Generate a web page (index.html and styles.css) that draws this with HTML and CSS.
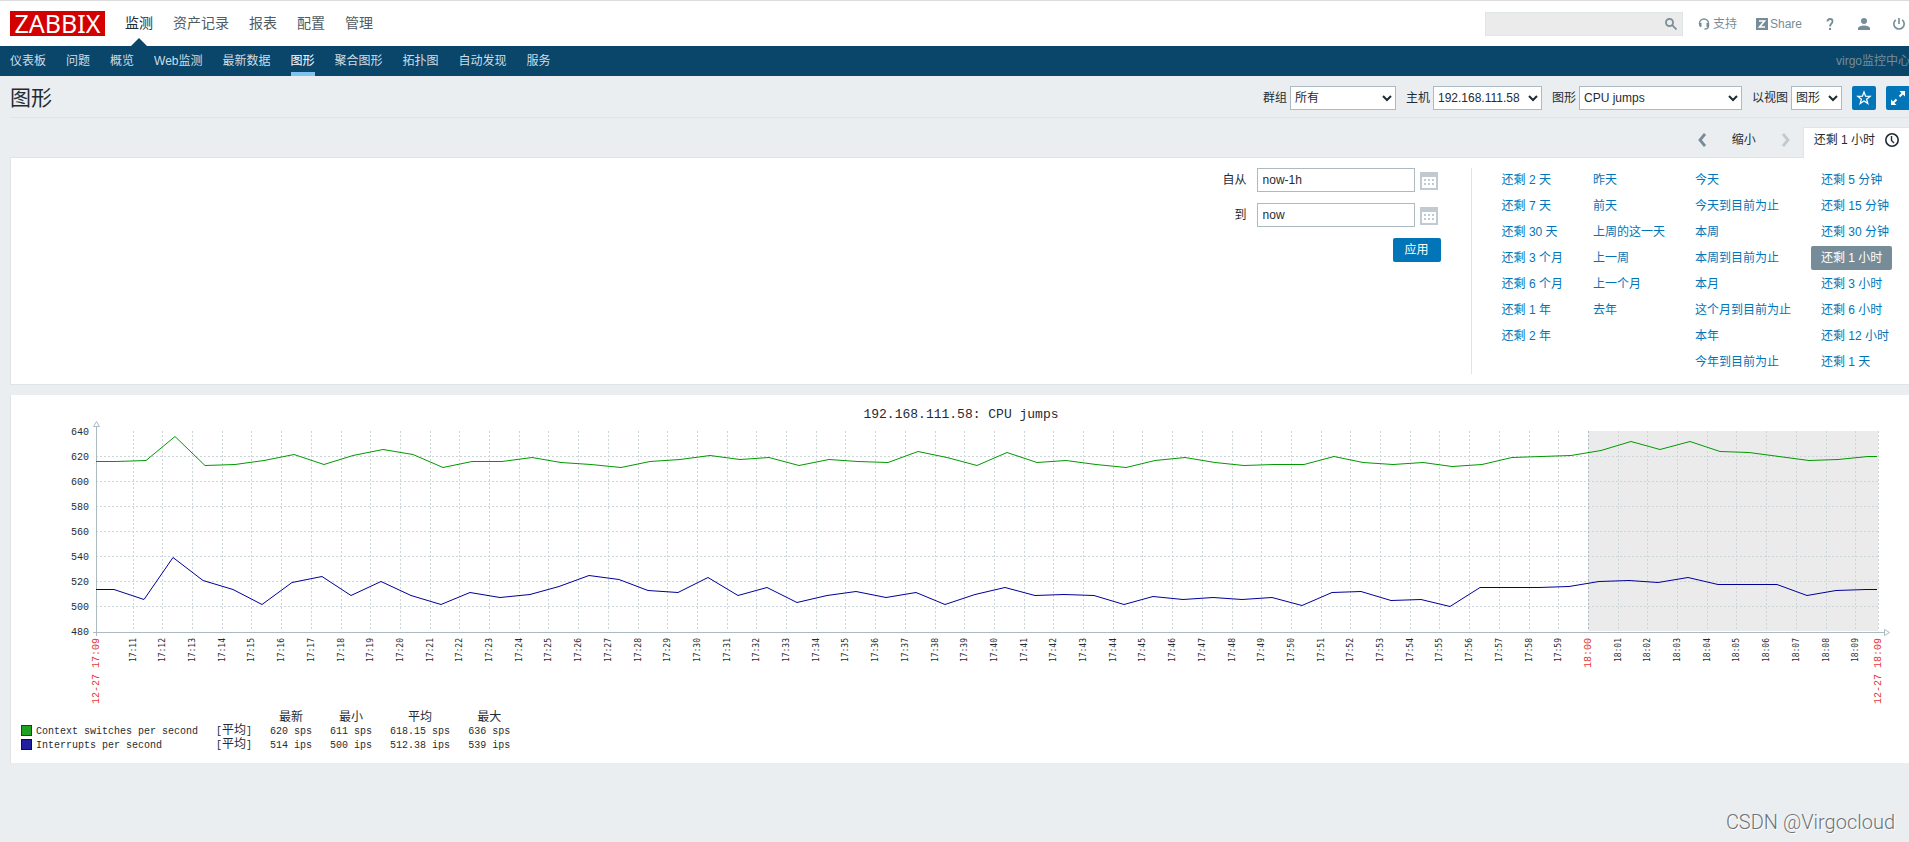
FILE: index.html
```html
<!DOCTYPE html>
<html lang="zh-CN">
<head>
<meta charset="utf-8">
<title>图形</title>
<link rel="stylesheet" href="styles.css">
</head>
<body>
<div class="page">
  <header class="top">
    <a class="logo" href="#" aria-label="ZABBIX">ZABBIX</a>
    <nav class="menu">
      <a class="current" href="#">监测</a>
      <a href="#">资产记录</a>
      <a href="#">报表</a>
      <a href="#">配置</a>
      <a href="#">管理</a>
    </nav>
    <div class="tools">
      <div class="search">
        <input type="text" aria-label="搜索">
        <button type="button" aria-label="搜索"><svg width="12" height="12" viewBox="0 0 12 12" fill="none" stroke="#768d99" stroke-width="1.700"><circle cx="4.500" cy="4.500" r="3.600"/><path d="M7.200 7.200l4.300 4.300"/></svg></button>
      </div>
      <a class="support" href="#"><svg width="12" height="12" viewBox="0 0 12 12"><path d="M1.500 6V5.500a4.500 4.500 0 0 1 9 0V8q0 3-4 3" fill="none" stroke="#768d99" stroke-width="1.400"/><path d="M1 5h2.500v4H2.500Q1 8.500 1 7zM8.500 5H11v2q0 1.500-1.500 2h-1z" fill="#768d99"/></svg>支持</a>
      <a class="share" href="#"><svg width="12" height="12" viewBox="0 0 12 12"><path d="M0 0h12v12H0z" fill="#768d99"/><path d="M3 3h5.500L3.500 9H9" fill="none" stroke="#fff" stroke-width="1.600"/></svg>Share</a>
      <a class="icon" href="#" aria-label="帮助"><svg width="12" height="14" viewBox="0 0 12 14"><path d="M3.500 4.500Q3.500 2 6 2t2.500 2.300Q8.500 5.800 7.300 6.800T6 9.500" fill="none" stroke="#768d99" stroke-width="1.800"/><path d="M5 11h2v2H5z" fill="#768d99"/></svg></a>
      <a class="icon" href="#" aria-label="用户"><svg width="12" height="14" viewBox="0 0 12 14" fill="#768d99"><circle cx="6" cy="4" r="3"/><path d="M0 13v-2q1-2.500 6-2.500t6 2.500v2z"/></svg></a>
      <a class="icon" href="#" aria-label="退出"><svg width="14" height="14" viewBox="0 0 14 14" fill="none" stroke="#768d99" stroke-width="1.600"><path d="M3.700 2.800a5.200 5.200 0 1 0 6.600 0M7 1v6"/></svg></a>
    </div>
  </header>
  <nav class="subnav">
    <a href="#">仪表板</a>
    <a href="#">问题</a>
    <a href="#">概览</a>
    <a href="#">Web监测</a>
    <a href="#">最新数据</a>
    <a class="current" href="#">图形</a>
    <a href="#">聚合图形</a>
    <a href="#">拓扑图</a>
    <a href="#">自动发现</a>
    <a href="#">服务</a>
    <span class="server">virgo监控中心</span>
  </nav>
  <main class="content">
    <div class="title-row">
      <h1>图形</h1>
      <form class="filters">
        <label>群组 <select class="group"><option>所有</option></select></label>
        <label>主机 <select class="host"><option>192.168.111.58</option></select></label>
        <label>图形 <select class="graph"><option>CPU jumps</option></select></label>
        <label>以视图 <select class="view"><option>图形</option></select></label>
        <button class="square" type="button" aria-label="收藏"><svg width="16" height="16" viewBox="0 0 16 16" fill="none" stroke="#fff" stroke-width="1.300"><path d="M8 2l1.600 4.200 4.500.2-3.500 2.800 1.200 4.300L8 11l-3.800 2.500 1.200-4.300L1.900 6.400l4.500-.2z"/></svg></button>
        <button class="square" type="button" aria-label="全屏"><svg width="14" height="14" viewBox="0 0 14 14" fill="#fff" stroke="#fff"><path d="M8.500 0h5.500v5.500zM0 8.500V14h5.500z" stroke="none"/><path d="M8.500 5.500l3-3M5.500 8.500l-3 3" stroke-width="2"/></svg></button>
      </form>
    </div>
    <div class="tabs">
      <button class="step" type="button" aria-label="上一页"><svg width="8" height="14" viewBox="0 0 8 14" fill="none" stroke="#768d99" stroke-width="2.800"><path d="M7 1L2 7l5 6"/></svg></button>
      <button class="zoom-out" type="button">缩小</button>
      <button class="step" type="button" aria-label="下一页" disabled><svg width="8" height="14" viewBox="0 0 8 14" fill="none" stroke="#c0cad0" stroke-width="2.800"><path d="M1 1l5 6-5 6"/></svg></button>
      <a class="tab" href="#">还剩 1 小时 <svg width="14" height="14" viewBox="0 0 14 14" fill="none" stroke="#1f2c33"><circle cx="7" cy="7" r="6.200" stroke-width="1.600"/><path d="M6.500 3v4.500L9 10" stroke-width="1.400"/></svg></a>
    </div>
    <section class="period">
      <form class="range">
        <label for="from">自从</label>
        <input id="from" type="text" value="now-1h">
        <button class="cal" type="button" aria-label="选择开始日期"><svg width="18" height="18" viewBox="0 0 18 18"><path d="M1 1h16v16H1z" fill="#fff" stroke="#c0cad0" stroke-width="2"/><path d="M1 1h16v4H1z" fill="#c0cad0"/><path d="M4 8h10M4 12h10" stroke="#c0cad0" stroke-width="2" stroke-dasharray="2"/></svg></button>
        <label for="to">到</label>
        <input id="to" type="text" value="now">
        <button class="cal" type="button" aria-label="选择结束日期"><svg width="18" height="18" viewBox="0 0 18 18"><path d="M1 1h16v16H1z" fill="#fff" stroke="#c0cad0" stroke-width="2"/><path d="M1 1h16v4H1z" fill="#c0cad0"/><path d="M4 8h10M4 12h10" stroke="#c0cad0" stroke-width="2" stroke-dasharray="2"/></svg></button>
        <button class="apply" type="button">应用</button>
      </form>
      <div class="presets">
        <div class="column">
          <a href="#">还剩 2 天</a><a href="#">还剩 7 天</a><a href="#">还剩 30 天</a><a href="#">还剩 3 个月</a><a href="#">还剩 6 个月</a><a href="#">还剩 1 年</a><a href="#">还剩 2 年</a>
        </div>
        <div class="column">
          <a href="#">昨天</a><a href="#">前天</a><a href="#">上周的这一天</a><a href="#">上一周</a><a href="#">上一个月</a><a href="#">去年</a>
        </div>
        <div class="column">
          <a href="#">今天</a><a href="#">今天到目前为止</a><a href="#">本周</a><a href="#">本周到目前为止</a><a href="#">本月</a><a href="#">这个月到目前为止</a><a href="#">本年</a><a href="#">今年到目前为止</a>
        </div>
        <div class="column">
          <a href="#">还剩 5 分钟</a><a href="#">还剩 15 分钟</a><a href="#">还剩 30 分钟</a><a class="selected" href="#">还剩 1 小时</a><a href="#">还剩 3 小时</a><a href="#">还剩 6 小时</a><a href="#">还剩 12 小时</a><a href="#">还剩 1 天</a>
        </div>
      </div>
    </section>
    <section class="chart">
      <svg id="plot" viewBox="0 0 1899 316" role="img" aria-label="192.168.111.58: CPU jumps"></svg>
      <table class="legend">
        <thead>
          <tr><th class="key"></th><th></th><th></th><th>最新</th><th>最小</th><th>平均</th><th>最大</th></tr>
        </thead>
        <tbody>
          <tr><td class="key"><i class="swatch green"></i></td><td>Context switches per second</td><td>[<b>平均</b>]</td><td>620 sps</td><td>611 sps</td><td>618.15 sps</td><td>636 sps</td></tr>
          <tr><td class="key"><i class="swatch blue"></i></td><td>Interrupts per second</td><td>[<b>平均</b>]</td><td>514 ips</td><td>500 ips</td><td>512.38 ips</td><td>539 ips</td></tr>
        </tbody>
      </table>
    </section>
  </main>
</div>
<div class="watermark">CSDN @Virgocloud</div>
<script src="chart.js"></script>
</body>
</html>
```

FILE: styles.css
```css
* { box-sizing: border-box; }

body {
  margin: 0;
  min-height: 100vh;
  position: relative;
  overflow: hidden;
  background: #ebeef0;
  color: #1f2c33;
  font: 12px/14px "Liberation Sans", "Noto Sans CJK SC", sans-serif;
}

a { color: #0275b8; text-decoration: none; }
svg { display: block; flex: none; }
button, input, select { font: inherit; color: inherit; margin: 0; }
button { border: 0; padding: 0; background: none; }

/* The page is slightly wider than the window, as its right margin runs off screen. */
.page { width: calc(100% + 11px); }

.top {
  display: flex;
  align-items: center;
  height: 46px;
  padding: 0 10px;
  border-top: 1px solid #dcdcdc;
  background: #fff;
}
.logo {
  width: 95px;
  height: 25px;
  background: #d40000;
  color: #fff;
  font: 25px/25px "Noto Sans", sans-serif;
  text-align: center;
}
.menu { display: flex; gap: 20px; margin-left: 20px; font-size: 14px; }
.menu a { position: relative; line-height: 45px; color: #4f5c63; }
.menu .current { color: #1f2c33; }
.menu .current::after {
  content: "";
  position: absolute;
  left: 50%;
  bottom: 0;
  margin-left: -8px;
  border: 8px solid transparent;
  border-top: 0;
  border-bottom-color: #0a466a;
}
.tools { display: flex; align-items: center; margin-left: auto; padding-right: 4px; }
.tools a { display: flex; align-items: center; color: #768d99; }
.search {
  display: flex;
  align-items: center;
  width: 198px;
  height: 24px;
  padding-right: 5px;
  border: 1px solid #dfe4e7;
  background: #ebebeb;
}
.search input { flex: 1; min-width: 0; border: 0; background: none; }
.support { gap: 3px; margin-left: 15px; }
.share { gap: 2px; margin-left: 19px; }
.icon { margin-left: 22px; }

.subnav {
  display: flex;
  gap: 20px;
  height: 30px;
  padding: 0 10px;
  background: #0a466a;
}
.subnav a { height: 30px; line-height: 30px; color: #cfdde5; white-space: nowrap; }
.subnav .current { color: #fff; border-bottom: 4px solid #7dc3f0; }
.server { margin-left: auto; line-height: 30px; color: #768d99; white-space: nowrap; }

.content { padding: 0 10px; }
.title-row {
  display: flex;
  align-items: center;
  justify-content: space-between;
  height: 42px;
  padding-top: 3px;
  border-bottom: 1px solid #dfe4e7;
}
h1 { margin: 0; font-size: 21px; line-height: 30px; font-weight: 400; }
.filters { display: flex; gap: 10px; }
.filters label { display: flex; align-items: center; gap: 3px; }
.filters select {
  height: 24px;
  border: 1px solid #acbbc2;
  border-radius: 0;
  background: #fff;
  padding: 0;
}
.filters .group { width: 106px; }
.filters .host { width: 109px; }
.filters .graph { width: 163px; }
.filters .view { width: 51px; }
.square {
  display: grid;
  place-items: center;
  width: 24px;
  height: 24px;
  border-radius: 2px;
  background: #0275b8;
}

.tabs {
  display: flex;
  justify-content: flex-end;
  height: 39px;
  padding-top: 9px;
}
.step, .zoom-out { height: 25px; }
.step { display: grid; place-items: center; width: 30px; }
.zoom-out { margin: 0 15px; }
.tab {
  display: flex;
  align-items: center;
  gap: 10px;
  height: 31px;
  margin-left: 2px;
  padding: 0 11px 6px 10px;
  border: 1px solid #dfe4e7;
  border-width: 1px 0 0 1px;
  background: #fff;
  color: #1f2c33;
  position: relative;
}
.period {
  display: flex;
  justify-content: flex-end;
  padding: 10px;
  border: 1px solid #dfe4e7;
  background: #fff;
}
.range {
  display: grid;
  grid-template-columns: auto 158px 21px;
  grid-auto-rows: 24px;
  gap: 11px 5px;
  align-items: center;
  padding-right: 30px;
}
.range label { text-align: right; margin-right: 5px; }
.range input { height: 24px; border: 1px solid #acbbc2; padding: 0 5px; }
.cal { display: flex; padding-top: 2px; }
.apply {
  grid-column: 1 / -1;
  justify-self: end;
  width: 48px;
  height: 24px;
  border-radius: 2px;
  background: #0275b8;
  color: #fff;
}
.presets {
  display: flex;
  gap: 10px;
  padding-left: 20px;
  border-left: 1px solid #dfe4e7;
}
.column { display: flex; flex-direction: column; align-items: flex-start; gap: 2px; }
.column a { padding: 0 10px; line-height: 24px; border-radius: 2px; white-space: nowrap; }
.column .selected { background: #768d99; color: #fff; }

.chart {
  margin-top: 10px;
  padding-bottom: 10px;
  border-left: 1px solid #dfe4e7;
  background: #fff;
}
.chart svg { width: 100%; height: auto; }
.chart text { font-family: "Liberation Mono", monospace; font-size: 10px; fill: #1f2c33; }
.chart .heading { font-size: 13px; }
.chart .minute { font-family: "DejaVu Sans Mono", monospace; font-size: 8px; }
.chart .major { fill: #e33734; }
.grid { stroke: #ccd5d9; stroke-dasharray: 2 2; }
.grid.hour { stroke: #acbbc2; }
.axis { fill: none; stroke: #acbbc2; }
.line { fill: none; stroke-width: 1; }

.legend {
  margin-left: 10px;
  border-collapse: collapse;
  font: 10px/14px "Liberation Mono", "Noto Sans CJK SC", monospace;
}
.legend th, .legend td { height: 14px; padding: 0 18px 0 0; white-space: nowrap; }
.legend th { font-size: 12px; font-weight: 400; }
.legend b { font-size: 12px; line-height: 10px; font-weight: 400; }
.legend .key { padding-right: 4px; }
.swatch {
  display: block;
  width: 11px;
  height: 11px;
  margin-bottom: 3px;
  border: 1px solid #0a500a;
  background: #1fa01f;
}
.swatch.blue { border-color: #0a0a50; background: #1f1fa0; }

.watermark {
  position: absolute;
  right: 14px;
  bottom: 8px;
  font: 300 20px/24px Roboto, sans-serif;
  color: #6f7377;
  text-shadow: 1px 1px 0 #fff;
}
```

FILE: chart.js
```js
const LEFT = 85, RIGHT = 1867, TOP = 36, BASE = 236;
const MINUTE = (RIGHT - LEFT) / 60;
const svg = document.getElementById("plot");

function add(tag, attrs, text) {
  const el = document.createElementNS("http://www.w3.org/2000/svg", tag);
  for (const key in attrs) el.setAttribute(key, attrs[key]);
  if (text) el.textContent = text;
  svg.appendChild(el);
}
const yOf = v => BASE - (v - 480) * (BASE - TOP) / 160;
function rotated(x, label, cls) {
  add("text", { class: cls, "text-anchor": "end", transform: `translate(${x + 3} 243) rotate(-90)` }, label);
}

add("text", { class: "heading", x: 950, y: 23, "text-anchor": "middle" }, "192.168.111.58: CPU jumps");

// Non-working hours, from 18:00 on
add("rect", { x: 1577, y: TOP, width: RIGHT - 1577, height: BASE - TOP, fill: "#ebebeb" });

for (let v = 480; v <= 640; v += 20) {
  if (v > 480 && v < 640) add("path", { class: "grid", d: `M${LEFT} ${yOf(v) + 0.5}H${RIGHT}` });
  add("text", { x: 78, y: yOf(v) + 4, "text-anchor": "end" }, String(v));
}

// The window starts at 17:09:45
for (let i = 0; i < 59; i++) {
  const minute = 11 + i;
  const x = Math.floor(LEFT + (i + 1.25) * MINUTE);
  const hour = minute === 60;
  add("path", { class: hour ? "grid hour" : "grid", d: `M${x + 0.5} ${TOP}V${BASE}` });
  const label = (minute < 60 ? "17:" : "18:") + String(minute % 60).padStart(2, "0");
  rotated(x, label, hour ? "major" : "minute");
}
add("path", { class: "grid", d: `M${RIGHT + 0.5} ${TOP}V${BASE}` });
rotated(LEFT, "12-27 17:09", "major");
rotated(RIGHT, "12-27 18:09", "major");

add("path", { class: "axis", d: `M${LEFT + 0.5} 31V241M82 237.5H1873` });
add("path", { class: "axis", d: "M82.5 31.5h6l-3-5zM1873.500 234.500v6l5-3z" });

function series(color, offset, first, values, last) {
  const points = [[LEFT, first], [LEFT + offset - MINUTE, first]];
  values.forEach((v, i) => points.push([LEFT + offset + i * MINUTE, v]));
  points.push([RIGHT - 1, last]);
  add("polyline", { class: "line", stroke: color,
    points: points.map(([x, v]) => `${Math.round(x)},${Math.round(yOf(v)) + 0.5}`).join(" ") });
}
series("#009900", 49.5, 616, [
  616.8, 636, 612.8, 613.6, 616.5, 621.6, 613.3, 620.5, 625.6, 621.3, 611, 616, 616, 619.2, 615.2,
  613.6, 611, 616, 617.6, 620.8, 617.6, 619.2, 612.5, 617.6, 616, 615.2, 624, 619.2, 612.5, 623.2,
  615.2, 616.8, 613.6, 611, 616.8, 619.2, 615, 612.8, 613.6, 613.6, 620, 615.2, 613.6, 615.2, 612,
  613.6, 619.2, 620, 620.8, 624.8, 632, 625.3, 632, 624, 623.2, 619.7, 616.8, 617.6, 619.7
], 620);
series("#000099", 47.5, 513.6, [
  505.3, 539.5, 520.8, 513.3, 501.3, 519, 524, 508.5, 520, 509, 501.3, 511.2, 507.2, 509.6, 516.3,
  524.8, 521.3, 512.8, 511.2, 523.2, 508.5, 515.2, 503, 508.8, 512, 507.2, 511.2, 501.6, 509.3, 515.2,
  508.8, 509.6, 508.8, 501.6, 508, 505.6, 507.2, 505.6, 507.2, 500.8, 511.2, 512, 504.8, 505.6, 500,
  515.2, 515.2, 515.2, 516, 520, 520.8, 519.2, 523.2, 517.6, 517.6, 517.6, 508.8, 512.8, 513.6
], 513.6);
```
